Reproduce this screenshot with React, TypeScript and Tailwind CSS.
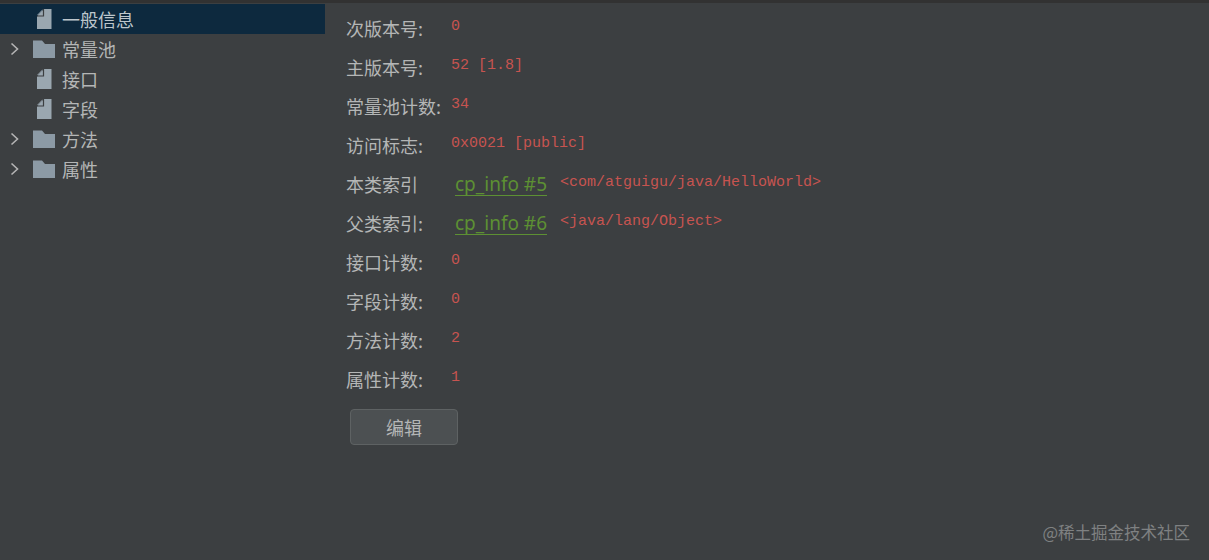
const cjk = "font-['Noto_Sans_CJK_SC','Noto_Sans',sans-serif]";

const treeItems = [
  { label: "一般信息", kind: "file", selected: true },
  { label: "常量池", kind: "folder" },
  { label: "接口", kind: "file" },
  { label: "字段", kind: "file" },
  { label: "方法", kind: "folder" },
  { label: "属性", kind: "folder" },
];

function FileIcon() {
  return (
    <svg width="16" height="22" viewBox="0 0 16 22" className="shrink-0">
      <path d="M15.5 1v20H1V8.5L8 1z" fill="#9aa7b0" />
      <path d="M6.5 1.2V7H1z" fill="#9aa7b0" opacity="0.75" />
      <path d="M7.5 1v7H1" fill="none" stroke="#3c3f41" strokeWidth="1.2" />
    </svg>
  );
}

function FolderIcon() {
  return (
    <svg width="22" height="18" viewBox="0 0 22 18" className="shrink-0">
      <path d="M0 0.5h9l3 3.5h10v14H0z" fill="#8c9aa5" />
    </svg>
  );
}

function Chevron() {
  return (
    <svg width="10" height="14" viewBox="0 0 10 14" className="shrink-0">
      <path d="M1.5 1.5 7.5 7l-6 5.5" fill="none" stroke="#b4b4b4" strokeWidth="1.6" />
    </svg>
  );
}

function TreeRow({ label, kind, selected }: { label: string; kind: string; selected?: boolean }) {
  return (
    <div className={`flex h-[30px] items-center ${selected ? "bg-[#0d293e] text-[#bdc6cc]" : "text-[#b4b6b6]"}`}>
      <div className="flex w-[33px] justify-center pl-[-2px]">{kind === "folder" && <span className="mr-[3px] flex"><Chevron /></span>}</div>
      <div className="flex w-[29px] items-center">
        {kind === "folder" ? <FolderIcon /> : <span className="ml-[3px] flex"><FileIcon /></span>}
      </div>
      <span className="text-[18px] leading-none">{label}</span>
    </div>
  );
}

function InfoRow({ label, value }: { label: string; value: string }) {
  return (
    <div className="flex h-[39px] items-center">
      <span className="w-[105px] shrink-0 text-[18px] leading-none text-[#b4b6b6]">{label}</span>
      <span className="whitespace-pre font-['Liberation_Mono',monospace] text-[15px] text-[#c75450]">{value}</span>
    </div>
  );
}

function LinkRow({ label, link, target }: { label: string; link: string; target: string }) {
  return (
    <div className="flex h-[39px] items-center">
      <span className="w-[109px] shrink-0 text-[18px] leading-none text-[#b4b6b6]">{label}</span>
      <span className="w-[105px] shrink-0">
        <span className="border-b border-[#5d9033] font-['Noto_Sans',sans-serif] text-[19px] leading-[22px] text-[#5d9033] inline-block">{link}</span>
      </span>
      <span className="whitespace-pre font-['Liberation_Mono',monospace] text-[15px] text-[#c75450]">{target}</span>
    </div>
  );
}

export default function App() {
  return (
    <div className={`relative flex h-[560px] w-[1209px] flex-col overflow-hidden bg-[#3c3f41] ${cjk}`}>
      <div className="h-[3px] shrink-0 bg-[#323232]" />
      <div className="flex flex-1">
        <div className="w-[325px] shrink-0 pt-[1px]">
          {treeItems.map((item) => (
            <TreeRow key={item.label} label={item.label} kind={item.kind} selected={item.selected} />
          ))}
        </div>
        <div className="flex-1 pl-[21px] pt-[5px]">
          <InfoRow label="次版本号:" value="0" />
          <InfoRow label="主版本号:" value="52 [1.8]" />
          <InfoRow label="常量池计数:" value="34" />
          <InfoRow label="访问标志:" value="0x0021 [public]" />
          <LinkRow label="本类索引" link="cp_info #5" target="<com/atguigu/java/HelloWorld>" />
          <LinkRow label="父类索引:" link="cp_info #6" target="<java/lang/Object>" />
          <InfoRow label="接口计数:" value="0" />
          <InfoRow label="字段计数:" value="0" />
          <InfoRow label="方法计数:" value="2" />
          <InfoRow label="属性计数:" value="1" />
          <button className="ml-[4px] mt-[11px] flex h-[36px] w-[108px] items-center justify-center rounded-[4px] border border-[#5e6263] bg-[#4c5052] text-[18px] leading-none text-[#b4b6b6]">
            编辑
          </button>
        </div>
      </div>
      <span className="absolute bottom-[20px] right-[19px] text-[16.5px] leading-none text-[#7f8182]">@稀土掘金技术社区</span>
    </div>
  );
}
